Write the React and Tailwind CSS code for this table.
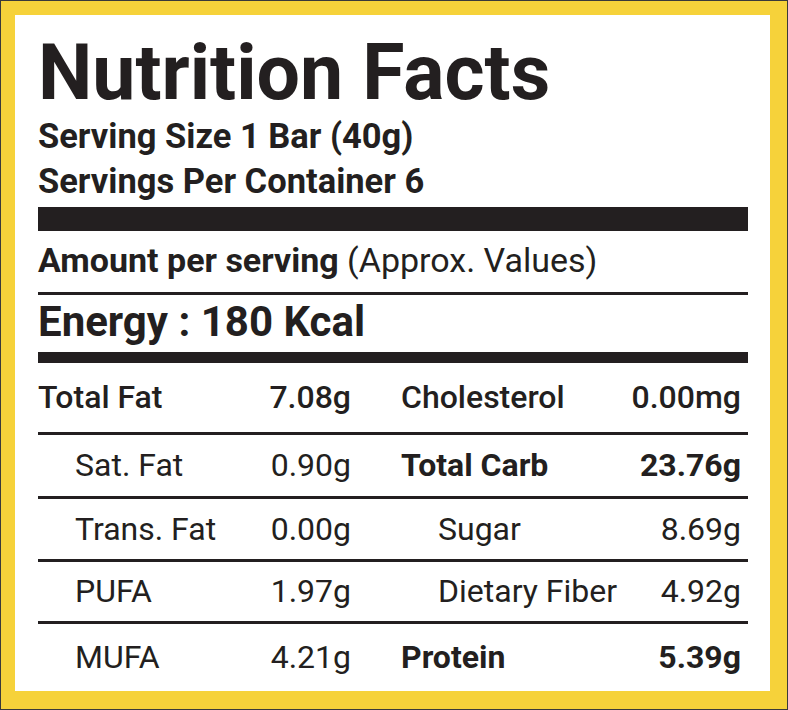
import React from 'react'

const rows = [
  { left: 'Total Fat', leftValue: '7.08g', leftStrong: true, right: 'Cholesterol', rightValue: '0.00mg', rightStyle: 'medium', h: 'h-[72px]' },
  { left: 'Sat. Fat', leftValue: '0.90g', indent: true, right: 'Total Carb', rightValue: '23.76g', rightStyle: 'bold', h: 'h-[64px]' },
  { left: 'Trans. Fat', leftValue: '0.00g', indent: true, right: 'Sugar', rightValue: '8.69g', rightIndent: true, h: 'h-[63px]' },
  { left: 'PUFA', leftValue: '1.97g', indent: true, right: 'Dietary Fiber', rightValue: '4.92g', rightIndent: true, h: 'h-[62px]' },
  { left: 'MUFA', leftValue: '4.21g', indent: true, right: 'Protein', rightValue: '5.39g', rightStyle: 'bold', h: 'flex-1', last: true },
]

function Row({ row }) {
  const leftWeight = row.leftStrong ? 'font-medium' : 'font-normal'
  const rightWeight =
    row.rightStyle === 'bold' ? 'font-bold' : row.rightStyle === 'medium' ? 'font-medium' : 'font-normal'
  return (
    <div
      className={`flex items-center ${row.h} ${row.last ? '' : 'border-b-[3px] border-[#231f20]'}`}
    >
      <div className="flex w-[313px] items-center justify-between">
        <span className={`${leftWeight} ${row.indent ? 'pl-[37px]' : ''}`}>{row.left}</span>
        <span className={leftWeight}>{row.leftValue}</span>
      </div>
      <div className="flex flex-1 items-center justify-between pr-[7px]">
        <span className={`${rightWeight} ${row.rightIndent ? 'pl-[87px]' : 'pl-[50px]'}`}>{row.right}</span>
        <span className={rightWeight}>{row.rightValue}</span>
      </div>
    </div>
  )
}

export default function App() {
  return (
    <div
      className="h-[710px] w-[788px] border border-[#3a3a3a] bg-[#f6d23a] pb-[18px] pl-[14px] pr-[17px] pt-[14px] text-[#231f20]"
      style={{ fontFamily: 'Roboto, "Open Sans", sans-serif' }}
    >
      <div className="flex h-full flex-col bg-white px-[23px] pr-[22px] pt-[20px]">
        <h1 className="text-[77px] font-bold leading-none">Nutrition Facts</h1>
        <p className="mt-[7px] text-[34.5px] font-bold leading-none">Serving Size 1 Bar (40g)</p>
        <p className="mt-[10.5px] text-[34.5px] font-bold leading-none">Servings Per Container 6</p>

        <div className="mt-[8px] h-[24px] bg-[#231f20]" />

        <p className="mt-[12px] text-[34px] leading-none">
          <span className="font-bold">Amount per serving</span>{' '}
          <span className="font-normal">(Approx. Values)</span>
        </p>

        <div className="mt-[15px] h-[3px] bg-[#231f20]" />

        <p className="mt-[6px] text-[42px] font-bold leading-none">Energy : 180 Kcal</p>

        <div className="mt-[9px] h-[11px] bg-[#231f20]" />

        <div className="flex flex-1 flex-col text-[32px] leading-none">
          {rows.map((row) => (
            <Row key={row.left} row={row} />
          ))}
        </div>
      </div>
    </div>
  )
}
